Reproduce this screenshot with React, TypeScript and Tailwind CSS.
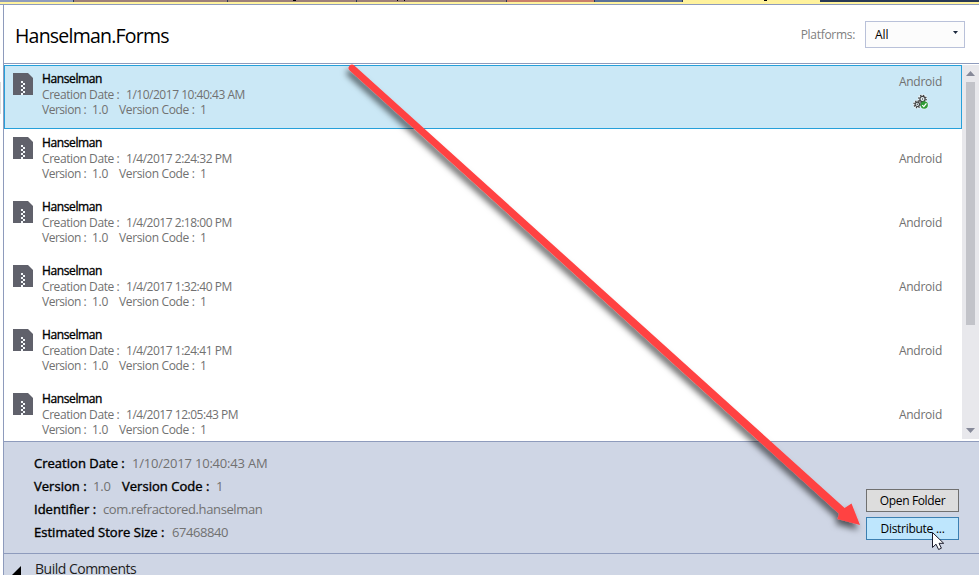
import React from "react";

const font = "font-['Segoe_UI','Open_Sans',sans-serif]";

const builds = [
  "1/10/2017 10:40:43 AM",
  "1/4/2017 2:24:32 PM",
  "1/4/2017 2:18:00 PM",
  "1/4/2017 1:32:40 PM",
  "1/4/2017 1:24:41 PM",
  "1/4/2017 12:05:43 PM",
];

function ZipIcon() {
  return (
    <svg width="20" height="22" viewBox="0 0 20 22" className="mt-[7px] shrink-0" shapeRendering="crispEdges">
      <path d="M0 0H15L20 5V22H0Z" fill="#60616b" shapeRendering="auto" />
      <path
        d="M8 8h2v2h-2zM10 10h2v2h-2zM8 12h2v2h-2zM10 14h2v2h-2zM8 16h2v2h-2zM10 18h2v2h-2zM8 20h2v2h-2z"
        fill="#f4f8fb"
      />
    </svg>
  );
}

function Gears() {
  return (
    <svg width="16" height="16" viewBox="0 0 16 16" className="mr-[13px]">
      <g fill="#fff" fillOpacity=".6">
        <circle cx="9.5" cy="5" r="4.8" />
        <circle cx="4.3" cy="10.3" r="4.4" />
        <circle cx="11.2" cy="11" r="4.3" />
      </g>
      <g fill="none" stroke="#424242">
        <circle cx="9.5" cy="5" r="2.6" strokeWidth="1.2" />
        <circle cx="9.5" cy="5" r="3.7" strokeWidth="1.3" strokeDasharray="1.4 1.5" />
        <circle cx="4.3" cy="10.3" r="2.2" strokeWidth="1.2" />
        <circle cx="4.3" cy="10.3" r="3.3" strokeWidth="1.3" strokeDasharray="1.3 1.29" />
      </g>
      <circle cx="9.5" cy="5" r=".7" fill="#424242" />
      <circle cx="4.3" cy="10.3" r=".7" fill="#424242" />
      <circle cx="11.2" cy="11" r="3.7" fill="#2f9b35" />
      <path d="M9.2 11.1 10.8 12.6 13.4 9.3" fill="none" stroke="#fff" strokeWidth="1.3" />
    </svg>
  );
}

function BuildRow({ date, selected }: { date: string; selected: boolean }) {
  return (
    <div
      className={
        "flex h-16 w-full shrink-0 border pl-2 " +
        (selected ? "border-[#26a0da] bg-[#cbe8f6]" : "border-transparent")
      }
    >
      <ZipIcon />
      <div className="ml-[9px] mt-[5px] flex-1 whitespace-nowrap text-[12px] leading-[15px] tracking-[-0.24px] text-[#717171]">
        <div className="mb-px h-[15px] tracking-[-0.38px] text-black [-webkit-text-stroke:0.35px_black]">Hanselman</div>
        <div className="flex h-[15px]">
          <span className="w-[84px] tracking-[-0.42px]">Creation Date :</span>
          <span className="tracking-[-0.48px]">{date}</span>
        </div>
        <div className="flex h-[15px]">
          <span className="w-[50px] tracking-[-0.48px]">Version :</span>
          <span className="w-[27px]">1.0</span>
          <span className="w-[81px] tracking-[-0.35px]">Version Code :</span>
          <span>1</span>
        </div>
      </div>
      <div
        className={
          "flex w-20 flex-col items-end pr-[19px] text-[12px] leading-4 tracking-[-0.24px] text-[#717171] " +
          (selected ? "pt-2" : "pt-[21px]")
        }
      >
        <span>Android</span>
        {selected && <div className="mt-[4px]"><Gears /></div>}
      </div>
    </div>
  );
}

function TabStrip() {
  return (
    <div className="flex h-0.5 shrink-0 bg-[#293955]">
      <div className="w-[73px] bg-[#8e9bbc]" />
      <div className="ml-px w-[153px] bg-[#9b7f7a]" />
      <div className="ml-px flex w-32 bg-[#9b7f7a]">
        <div className="ml-[65px] h-px w-[3px] bg-black" />
      </div>
      <div className="ml-px flex w-[149px] bg-[#9b7f7a]">
        <div className="ml-10 h-px w-px bg-black" />
        <div className="ml-[6px] h-px w-px bg-black" />
      </div>
      <div className="ml-px w-[87px] bg-[#c87f6b]" />
      <div className="ml-px w-[87px] bg-[#5b7199]" />
      <div className="ml-px flex w-[137px] bg-[#fff29d]">
        <div className="ml-[81px] h-px w-[3px] bg-black" />
      </div>
    </div>
  );
}

function Button({ label, active }: { label: string; active: boolean }) {
  return (
    <div
      className={
        "flex h-[23px] w-[93px] items-center justify-center whitespace-pre border text-[12px] leading-none text-black " +
        (active ? "border-[#3c7fb1] bg-[#bee6fd] tracking-[-0.28px]" : "border-[#707070] bg-[#dddddd] tracking-[-0.35px]")
      }
    >
      {label}
    </div>
  );
}

function Details() {
  return (
    <div className="flex h-[112px] shrink-0 border-t border-[#8e9bbc] bg-[#cfd6e5] pl-[30px]">
      <div className="flex-1 whitespace-nowrap pt-[10px] text-[13px] leading-[23px] text-[#717171] [&_b]:font-normal [&_b]:tracking-[0.02px] [&_b]:text-black [&_b]:[-webkit-text-stroke:0.4px_black]">
        <div className="flex">
          <b className="w-[98px]">Creation Date :</b>
          <span className="tracking-[-0.2px]">1/10/2017 10:40:43 AM</span>
        </div>
        <div className="flex">
          <b className="w-[59px]">Version :</b>
          <span className="w-[29px] tracking-[-0.2px]">1.0</span>
          <b className="w-[94px]">Version Code :</b>
          <span>1</span>
        </div>
        <div className="flex">
          <b className="w-[69px]">Identifier :</b>
          <span className="tracking-[-0.38px]">com.refractored.hanselman</span>
        </div>
        <div className="flex">
          <b className="w-[138px]">Estimated Store Size :</b>
          <span className="tracking-[-0.45px]">67468840</span>
        </div>
      </div>
      <div className="mr-5 mt-[47px] flex flex-col gap-[5px]">
        <Button label="Open Folder" active={false} />
        <Button label="Distribute ..." active />
      </div>
    </div>
  );
}

export default function App() {
  return (
    <div className={"relative flex h-[575px] w-[979px] flex-col overflow-hidden bg-white " + font}>
      <TabStrip />
      <div className="h-0.5 shrink-0 bg-[#fff29d]" />
      <div className="h-px shrink-0 bg-[#8e9bbc]" />
      <div className="flex min-h-0 flex-1">
        <div className="w-[3px] shrink-0 pt-[77px]">
          <div className="h-8 w-px bg-[#dcdcdc]" />
        </div>
        <div className="flex min-w-0 flex-1 flex-col border-l border-[#8e9bbc]">
          <header className="flex h-[59px] shrink-0 items-center border-b border-[#8e9bbc] pl-[11px] pr-[14px]">
            <h1 className="flex-1 pt-[4px] text-[19.5px] leading-6 tracking-[-0.78px] text-black">Hanselman.Forms</h1>
            <span className="mr-[10px] pt-px text-[12px] tracking-[-0.3px] text-[#808080]">Platforms:</span>
            <div className="flex h-[27px] w-[100px] items-center justify-between border border-[#b9c1d9] bg-[#fcfcfc] pl-[9px] pr-[6px] text-[12px] text-black">
              <span className="pt-px">All</span>
              <svg width="5" height="3" viewBox="0 0 5 3" className="-mt-[3px]">
                <path d="M0 0H5L2.5 3Z" fill="#1b293e" />
              </svg>
            </div>
          </header>
          <div className="flex h-[377px] shrink-0 pt-px">
            <div className="flex w-[958px] flex-col overflow-hidden">
              {builds.map((date, i) => (
                <BuildRow key={date} date={date} selected={i === 0} />
              ))}
            </div>
            <div className="flex h-[374px] w-[17px] flex-col items-center bg-[#e8e8ec]">
              <svg width="9" height="5" viewBox="0 0 9 5" className="mt-[6px] shrink-0">
                <path d="M4.5 0 9 5H0Z" fill="#868999" />
              </svg>
              <div className="mt-[6px] h-[243px] w-[9px] shrink-0 bg-[#c2c3c9]" />
              <svg width="9" height="5" viewBox="0 0 9 5" className="mb-[6px] mt-auto shrink-0">
                <path d="M0 0H9L4.5 5Z" fill="#868999" />
              </svg>
            </div>
          </div>
          <Details />
          <div className="flex h-[22px] shrink-0 border-t border-[#8e9bbc] bg-[#cfd6e5] pl-2">
            <svg width="9" height="9" viewBox="0 0 9 9" className="mt-[12px]">
              <path d="M9 0V9H0Z" fill="#000" />
            </svg>
            <span className="ml-[14px] mt-[8px] h-[13px] text-[14px] leading-[13px] tracking-[-0.5px] text-[#1e1e1e]">Build Comments</span>
          </div>
        </div>
      </div>
      <svg width="979" height="575" viewBox="0 0 979 575" className="pointer-events-none absolute inset-0">
        <defs>
          <filter id="arrow-shadow" x="-5%" y="-5%" width="110%" height="110%">
            <feDropShadow dx="-2" dy="5" stdDeviation="3" floodColor="#000" floodOpacity=".6" />
          </filter>
        </defs>
        <path
          d="M354.3 65.5 844.6 508 851.5 503.5 860 525 837.5 519 839 513.8 349.7 70.5A3.3 3.3 0 0 1 354.3 65.5Z"
          fill="#ff4343"
          filter="url(#arrow-shadow)"
        />
        <path
          d="M932.5 532.5V547.5L936 544.2 938.6 549.5 941.4 548.2 939 543.3H943.7Z"
          fill="#fff"
          stroke="#1b1b2b"
          strokeWidth="1"
        />
      </svg>
    </div>
  );
}
